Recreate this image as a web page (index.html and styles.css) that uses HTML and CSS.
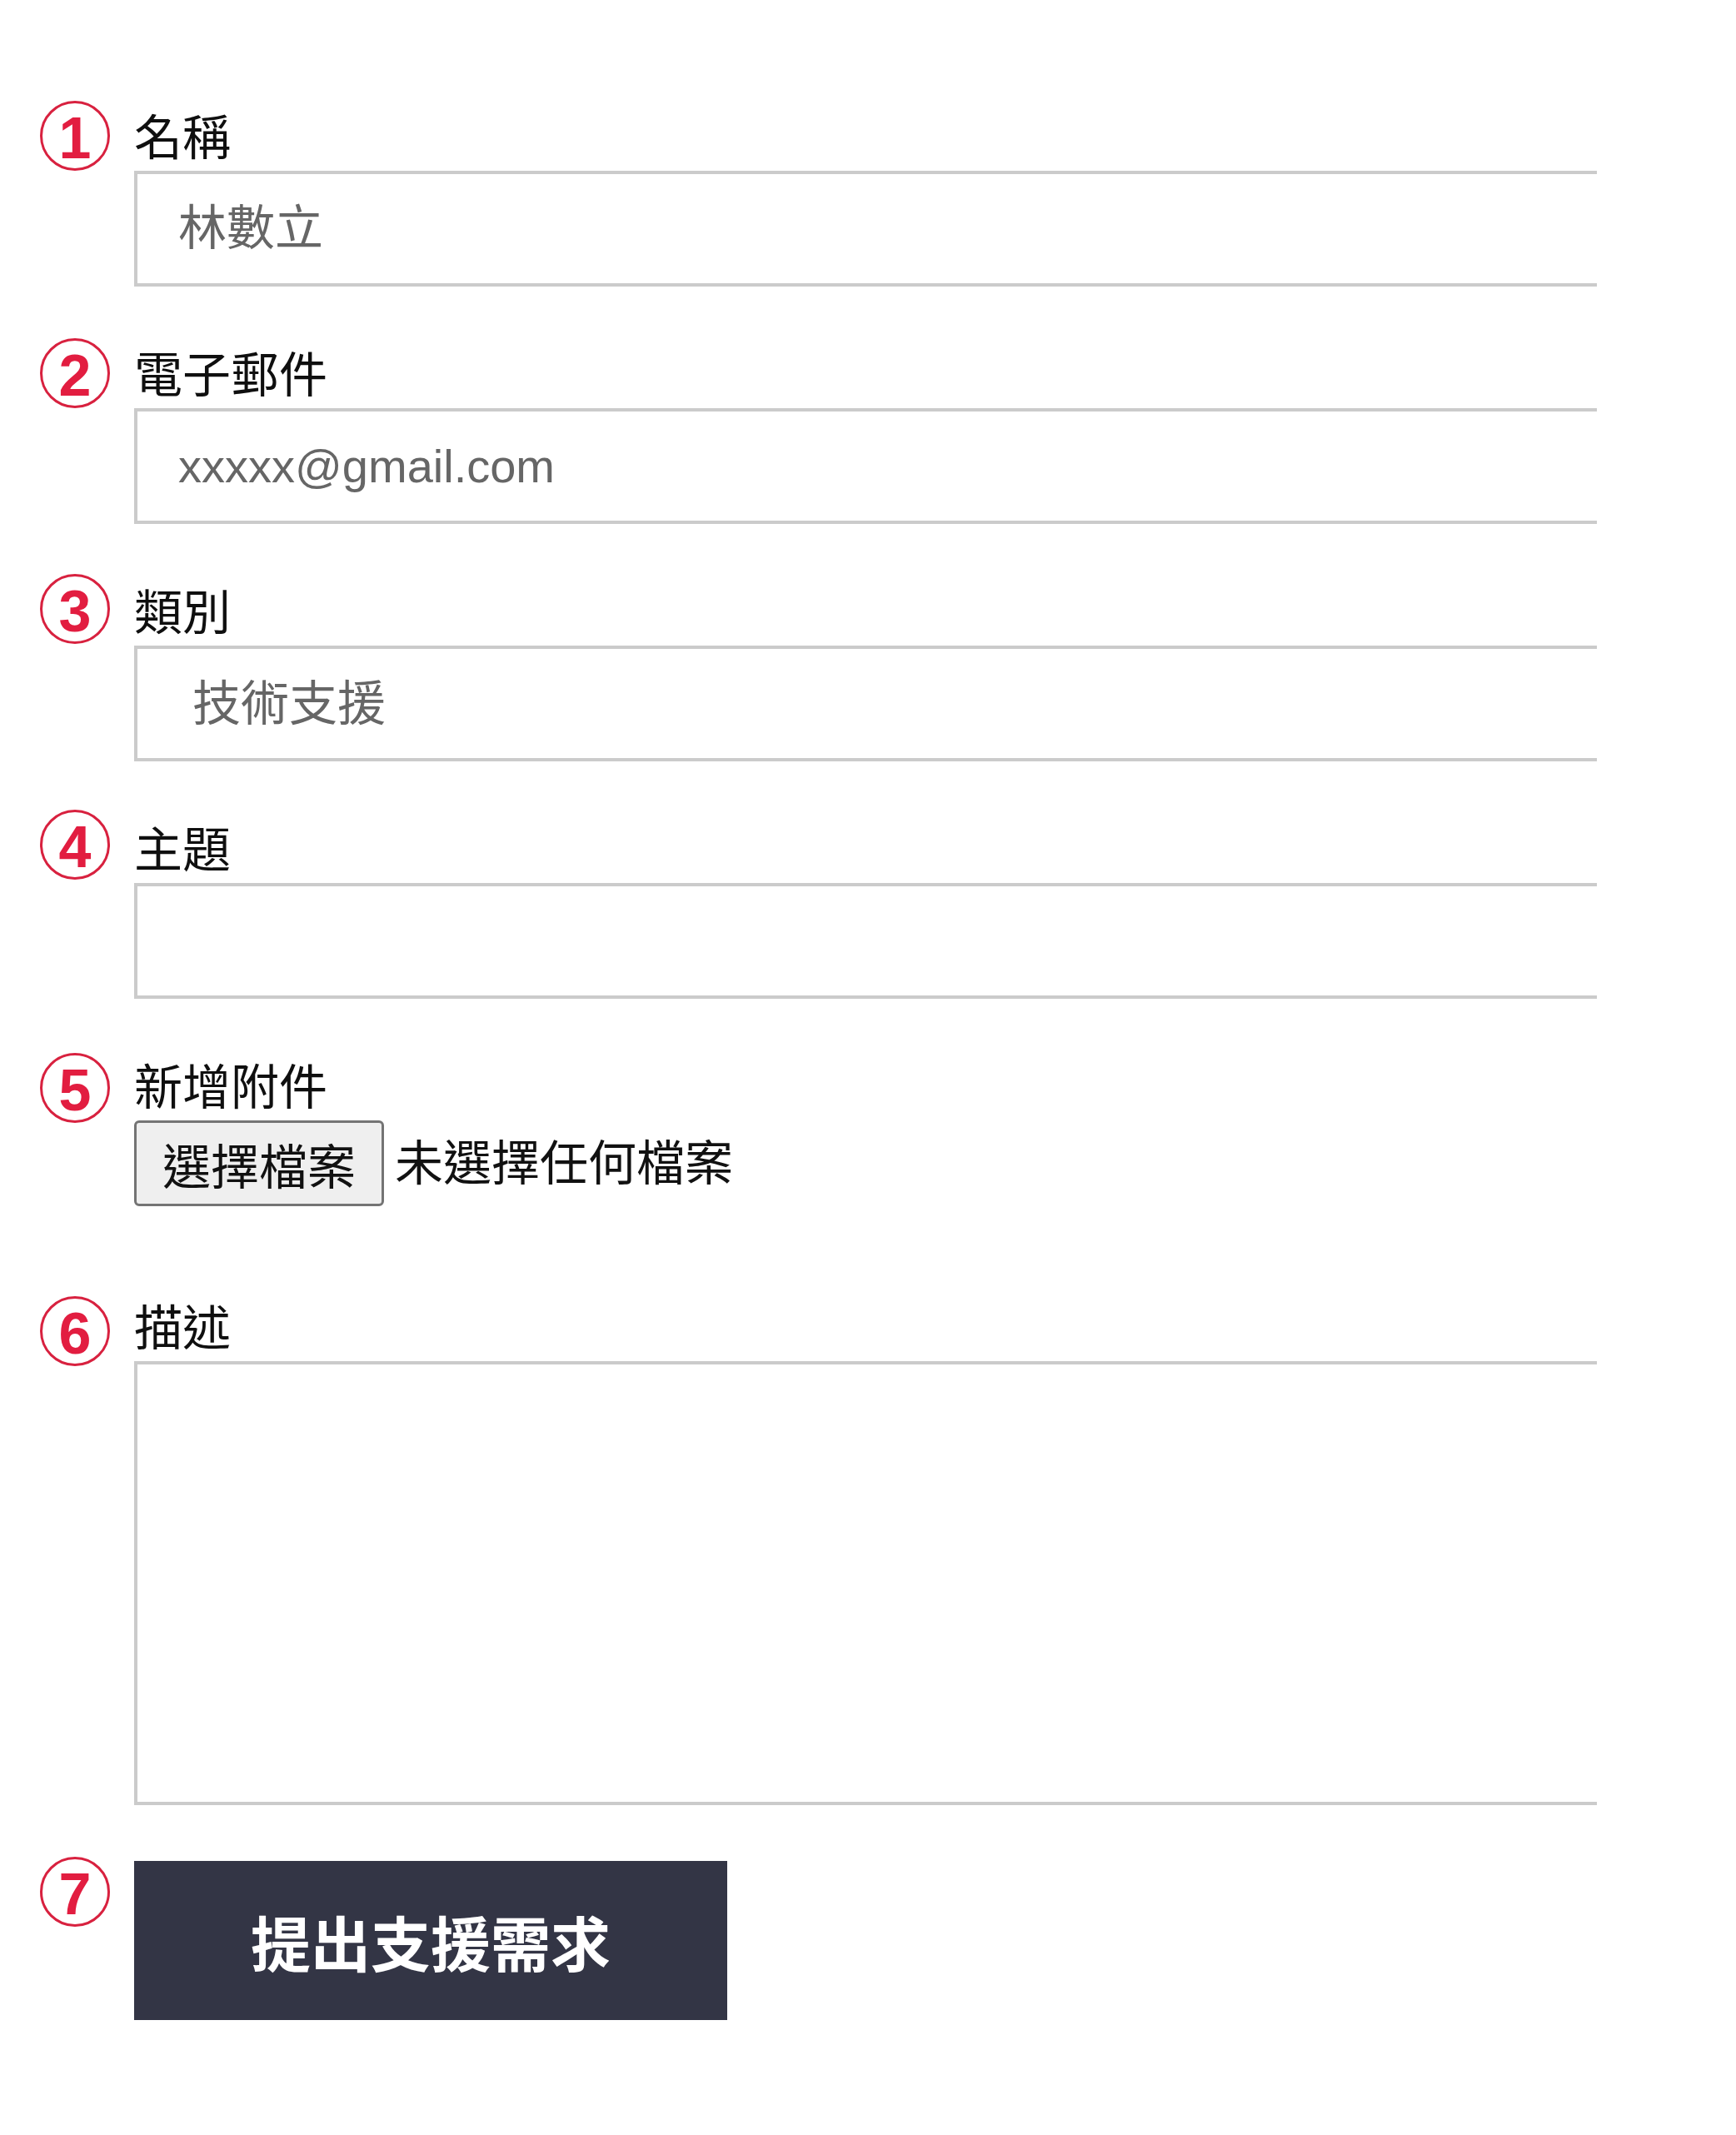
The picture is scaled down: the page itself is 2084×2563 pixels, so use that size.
FILE: index.html
```html
<!DOCTYPE html>
<html lang="zh-Hant">
<head>
<meta charset="utf-8">
<title>支援需求表單</title>
<link rel="stylesheet" href="styles.css">
</head>
<body>
<form class="form">
  <div class="row">
    <div class="marker"><span class="digit">1</span></div>
    <div class="field">
      <label class="label" for="f-name">名稱</label>
      <input class="control control--cjk" id="f-name" type="text" value="林數立">
    </div>
  </div>

  <div class="row">
    <div class="marker"><span class="digit">2</span></div>
    <div class="field">
      <label class="label" for="f-mail">電子郵件</label>
      <input class="control" id="f-mail" type="text" value="xxxxx@gmail.com">
    </div>
  </div>

  <div class="row">
    <div class="marker marker--r3"><span class="digit">3</span></div>
    <div class="field">
      <label class="label" for="f-cat">類別</label>
      <select class="control control--select" id="f-cat">
        <option>技術支援</option>
      </select>
    </div>
  </div>

  <div class="row">
    <div class="marker marker--r4"><span class="digit">4</span></div>
    <div class="field">
      <label class="label" for="f-subj">主題</label>
      <input class="control" id="f-subj" type="text" value="">
    </div>
  </div>

  <div class="row">
    <div class="marker marker--r5"><span class="digit">5</span></div>
    <div class="field">
      <span class="label">新增附件</span>
      <div class="file">
        <span class="file-btn">選擇檔案</span>
        <span class="file-text">未選擇任何檔案</span>
      </div>
    </div>
  </div>

  <div class="row">
    <div class="marker marker--r6"><span class="digit">6</span></div>
    <div class="field">
      <label class="label" for="f-desc">描述</label>
      <textarea class="control control--area" id="f-desc"></textarea>
    </div>
  </div>

  <div class="row row--last">
    <div class="marker"><span class="digit">7</span></div>
    <div class="field">
      <button class="submit" type="button">提出支援需求</button>
    </div>
  </div>
</form>
</body>
</html>
```

FILE: styles.css
```css
html, body {
  margin: 0;
  padding: 0;
  background: #ffffff;
}

body {
  font-family: "Liberation Sans", "Noto Sans CJK TC", sans-serif;
  font-size: 56px;
  color: #1a1a1a;
}

.form {
  padding-top: 126px;
}

.row {
  display: flex;
  align-items: flex-start;
  margin-bottom: 67px;
}

.row--last {
  margin-bottom: 0;
}

.marker {
  flex: none;
  box-sizing: border-box;
  width: 84px;
  height: 84px;
  margin: -5px 29px 0 48px;
  border: 3px solid #d8213f;
  border-radius: 50%;
  display: flex;
  align-items: center;
  justify-content: center;
}

.marker--r3 { margin-top: -7px; }
.marker--r4 { margin-top: -9px; }
.marker--r5 { margin-top: -2px; }
.marker--r6 { margin-top: 1px; }

.digit {
  font-family: "Liberation Sans", "Helvetica", sans-serif;
  font-weight: 700;
  font-size: 70px;
  line-height: 70px;
  color: #e21d40;
  padding-top: 6px;
}

.field {
  width: 1756px;
  flex: none;
}

.label {
  display: block;
  font-size: 58px;
  line-height: 79px;
  height: 79px;
  color: #0f0f0f;
}

.control {
  display: block;
  box-sizing: border-box;
  width: 100%;
  height: 139px;
  margin: 0;
  padding: 0 0 0 49px;
  border: 4px solid #cbcbcb;
  border-right: none;
  border-radius: 0;
  background: #ffffff;
  font-family: "Liberation Sans", "Noto Sans CJK TC", sans-serif;
  font-size: 56px;
  color: #666666;
  outline: none;
  -webkit-appearance: none;
  appearance: none;
}

.control--cjk {
  font-size: 58px;
  padding-bottom: 12px;
}

.control--select {
  font-size: 58px;
  padding-left: 66px;
}

.control--area {
  height: 533px;
  resize: none;
}

.file {
  height: 143px;
  display: flex;
  align-items: flex-start;
}

.file-btn {
  box-sizing: border-box;
  height: 103px;
  padding: 0 31px;
  display: flex;
  align-items: center;
  border: 3px solid #747474;
  border-radius: 6px;
  background: #efefef;
  color: #111111;
  font-size: 58px;
}

.file-text {
  margin-left: 13px;
  height: 103px;
  line-height: 103px;
  font-size: 58px;
  color: #111111;
}

.submit {
  display: block;
  width: 712px;
  height: 191px;
  margin: 0;
  padding: 0;
  border: none;
  border-radius: 0;
  background: #333545;
  color: #ffffff;
  font-family: "Noto Sans CJK TC", sans-serif;
  font-weight: 700;
  font-size: 72px;
  cursor: pointer;
}
```
